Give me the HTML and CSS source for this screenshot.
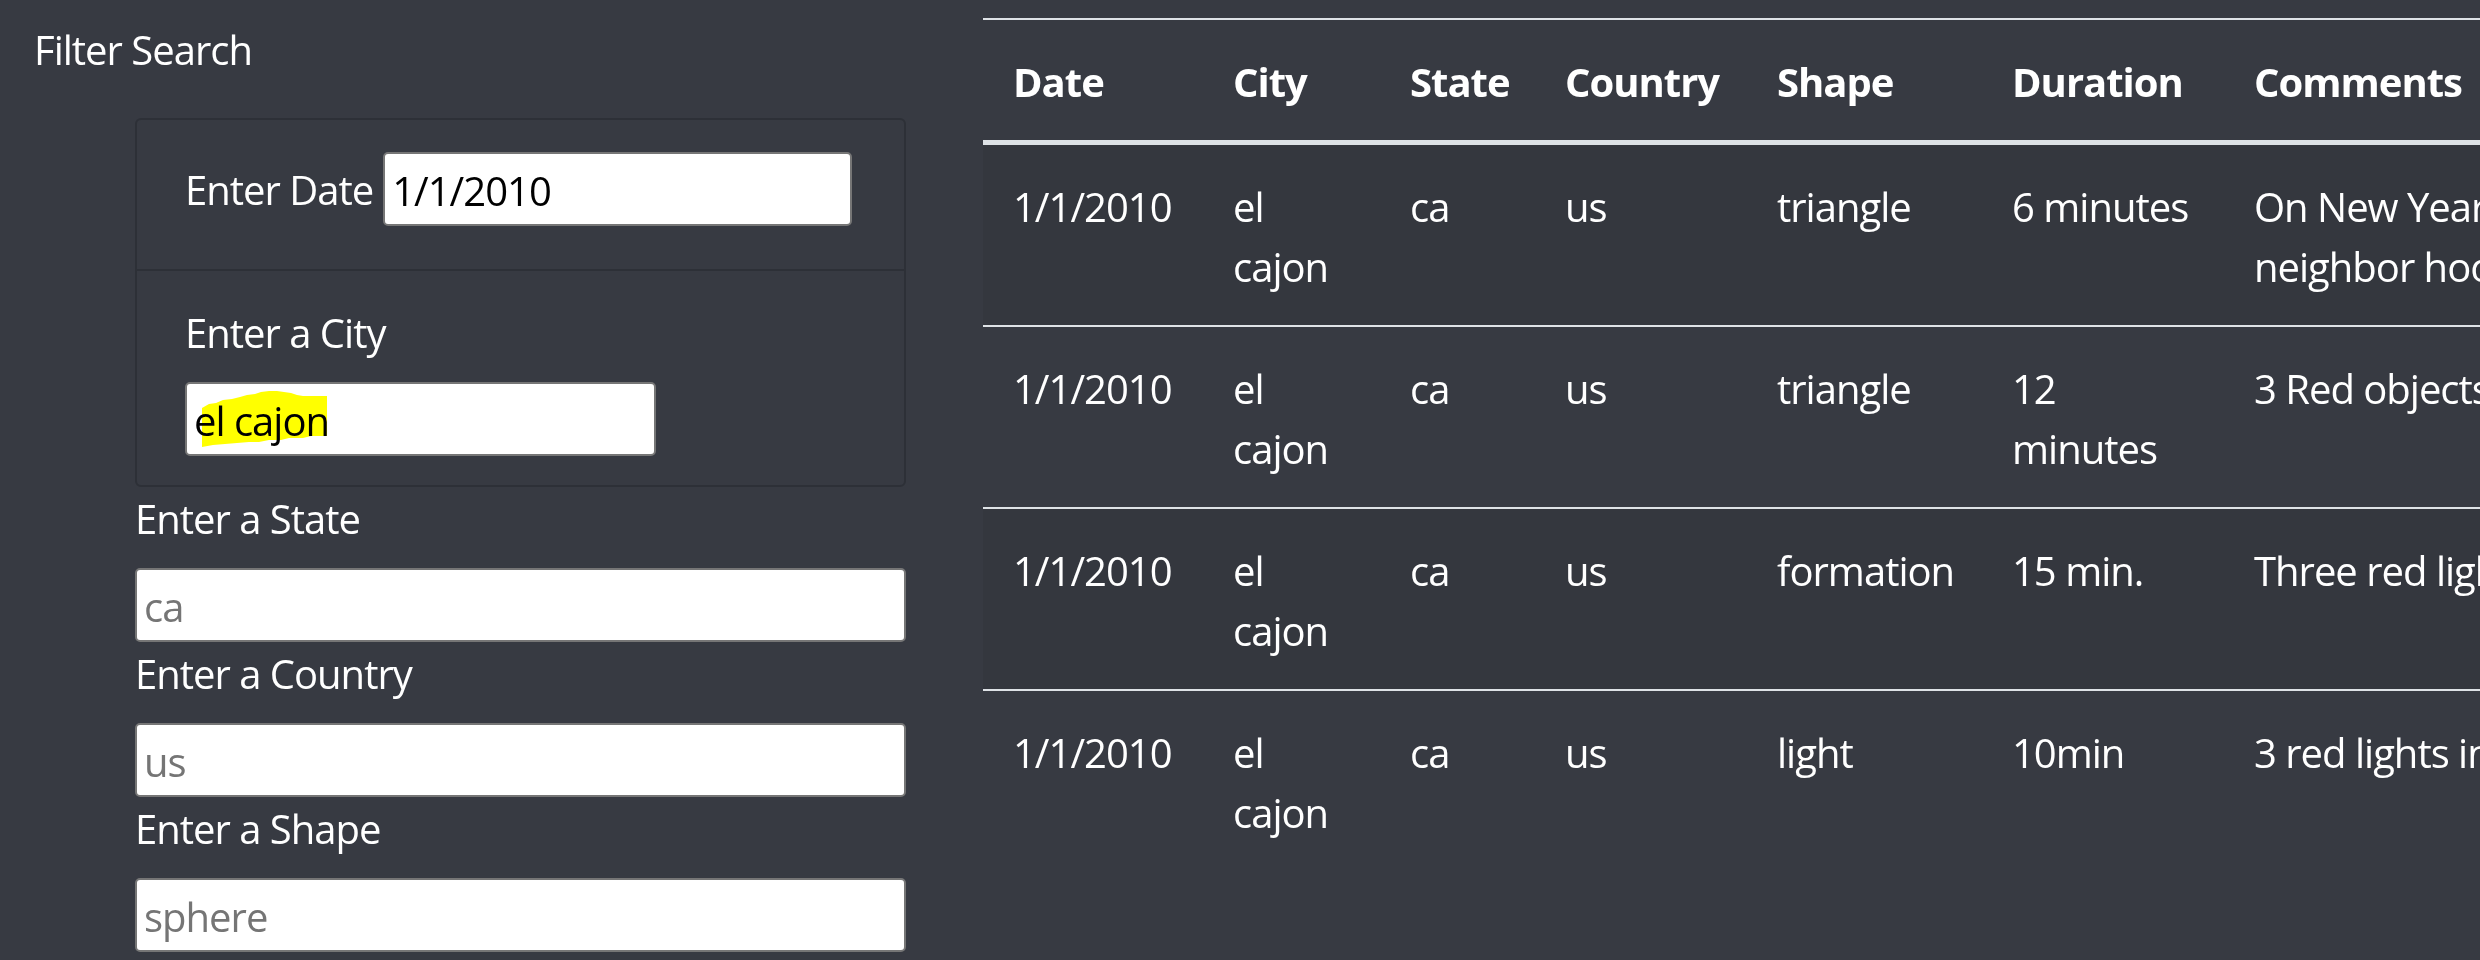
FILE: index.html
```html
<!DOCTYPE html>
<html lang="en">
<head>
<meta charset="utf-8">
<title>UFO Sightings</title>
<link rel="stylesheet" href="styles.css">
</head>
<body>
<div class="page">
  <aside class="sidebar">
    <p class="title">Filter Search</p>
    <form class="filters">
      <ul class="list-group">
        <li class="list-group-item item-inline">
          <label class="label label-inline" for="datetime">Enter Date</label>
          <input class="input input-date" id="datetime" type="text" value="1/1/2010">
        </li>
        <li class="list-group-item item-stack">
          <label class="label" for="city">Enter a City</label>
          <span class="marker-wrap">
            <input class="input input-city" id="city" type="text" value="el cajon">
            <svg class="marker" width="471" height="74" viewBox="0 0 471 74" aria-hidden="true">
              <polygon points="17,26 24,22 31,21 38,18 47,17 55,15 62,13 70,12 76,10 84,9 92,9 99,10 106,11 112,13 118,14 142,14 142,54 126,54 118,56 104,56 96,58 84,58 74,60 64,60 52,61 40,62 28,63 17,65" fill="#ffff00"/>
            </svg>
          </span>
        </li>
      </ul>
      <div class="field">
        <label class="label" for="state">Enter a State</label>
        <input class="input input-full" id="state" type="text" placeholder="ca">
      </div>
      <div class="field">
        <label class="label" for="country">Enter a Country</label>
        <input class="input input-full" id="country" type="text" placeholder="us">
      </div>
      <div class="field">
        <label class="label" for="shape">Enter a Shape</label>
        <input class="input input-full" id="shape" type="text" placeholder="sphere">
      </div>
    </form>
  </aside>
  <main class="results">
    <table class="ufo-table">
      <colgroup>
        <col class="c-date">
        <col class="c-city">
        <col class="c-state">
        <col class="c-country">
        <col class="c-shape">
        <col class="c-duration">
        <col class="c-comments">
      </colgroup>
      <thead>
        <tr>
          <th>Date</th>
          <th>City</th>
          <th>State</th>
          <th>Country</th>
          <th>Shape</th>
          <th>Duration</th>
          <th>Comments</th>
        </tr>
      </thead>
      <tbody>
        <tr>
          <td>1/1/2010</td>
          <td>el cajon</td>
          <td>ca</td>
          <td>us</td>
          <td>triangle</td>
          <td>6 minutes</td>
          <td>On New Year's Eve my family and I watched three orange lights over our<br>neighbor hood moving slowly to the east.</td>
        </tr>
        <tr>
          <td>1/1/2010</td>
          <td>el cajon</td>
          <td>ca</td>
          <td>us</td>
          <td>triangle</td>
          <td>12 minutes</td>
          <td>3 Red objects flying in formation over El Cajon.</td>
        </tr>
        <tr>
          <td>1/1/2010</td>
          <td>el cajon</td>
          <td>ca</td>
          <td>us</td>
          <td>formation</td>
          <td>15 min.</td>
          <td>Three red lights moving slowly across the sky.</td>
        </tr>
        <tr>
          <td>1/1/2010</td>
          <td>el cajon</td>
          <td>ca</td>
          <td>us</td>
          <td>light</td>
          <td>10min</td>
          <td>3 red lights in a triangle shape, silent.</td>
        </tr>
      </tbody>
    </table>
  </main>
</div>
</body>
</html>
```

FILE: styles.css
```css
html,
body {
  margin: 0;
  height: 960px;
  overflow: hidden;
  background: #373a42;
}

body {
  font-family: "Open Sans", "Noto Sans", sans-serif;
  font-size: 40px;
  line-height: 60px;
  letter-spacing: -1px;
  color: #ffffff;
}

.page {
  display: flex;
  align-items: flex-start;
  padding-top: 18px;
}

.sidebar {
  flex: 0 0 983px;
  width: 983px;
  box-sizing: border-box;
  padding-left: 34px;
}

.title {
  margin: 0 0 38px;
  padding-top: 2px;
  line-height: 60px;
}

.filters {
  margin: 0 0 0 101px;
  width: 771px;
}

.list-group {
  list-style: none;
  margin: 0;
  padding: 0;
  border: 2px solid #2d3037;
  border-radius: 6px;
}

.list-group-item {
  padding: 30px 48px 29px;
}

.list-group-item + .list-group-item {
  border-top: 2px solid #2d3037;
}

.item-inline {
  display: flex;
  align-items: flex-start;
  gap: 10px;
  padding-top: 32px;
  padding-bottom: 31px;
}

.label {
  display: block;
  margin: 0 0 19px;
  padding-top: 2px;
  line-height: 60px;
}

.label-inline {
  margin: 6px 0 18px;
}

.input {
  display: block;
  box-sizing: border-box;
  height: 74px;
  margin: 0;
  padding: 3px 7px 0;
  border: 2px solid #767676;
  border-radius: 5px;
  background: #ffffff;
  color: #000000;
  font-family: inherit;
  font-size: 40px;
  letter-spacing: -1px;
  outline: none;
}

.input::placeholder {
  color: #757575;
  opacity: 1;
}

.input-date {
  width: 469px;
}

.marker-wrap {
  position: relative;
  display: block;
  width: 471px;
}

.input-city {
  width: 471px;
}

.marker {
  position: absolute;
  left: 0;
  top: 0;
  pointer-events: none;
  mix-blend-mode: multiply;
}

.input-full {
  width: 100%;
}

.results {
  flex: none;
}

.ufo-table {
  border-collapse: separate;
  border-spacing: 0;
  table-layout: fixed;
  width: 2641px;
}

.c-date { width: 220px; }
.c-city { width: 177px; }
.c-state { width: 155px; }
.c-country { width: 212px; }
.c-shape { width: 235px; }
.c-duration { width: 242px; }
.c-comments { width: 1400px; }

.ufo-table th,
.ufo-table td {
  padding: 32px 30px 28px;
  text-align: left;
  vertical-align: top;
  line-height: 60px;
}

.ufo-table th {
  font-weight: 700;
  border-top: 2px solid #dee2e6;
  border-bottom: 5px solid #dee2e6;
}

.ufo-table tbody tr + tr td {
  border-top: 2px solid #dee2e6;
}

.ufo-table tbody tr:nth-child(odd) td {
  background: rgba(0, 0, 0, 0.05);
}
```
